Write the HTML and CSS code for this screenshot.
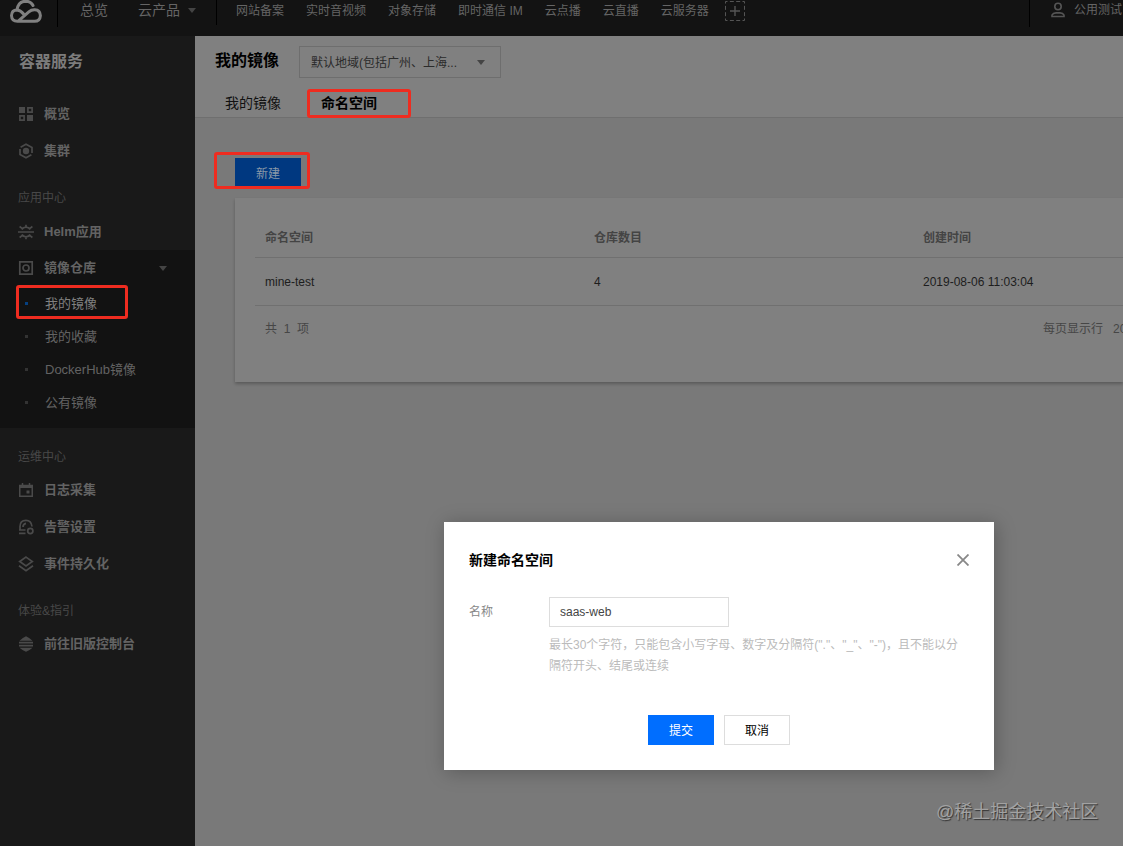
FILE: index.html
```html
<!DOCTYPE html>
<html lang="zh-CN">
<head>
<meta charset="utf-8">
<title>容器服务 - 命名空间</title>
<link rel="stylesheet" href="styles.css">
</head>
<body>
<div class="app">
  <header class="topbar">
    <div class="brand">
      <svg width="34" height="26" viewBox="0 0 34 26" fill="none" stroke="currentColor" stroke-width="3" stroke-linejoin="round" stroke-linecap="round"><path d="M14.800 14.200Q11.500 10 8 10Q2.700 10.200 2.500 15.500Q2.700 21.300 8.500 21.300H25.500Q31 21.300 31.400 15.600Q31.200 10.100 25.800 9.800Q22.500 9.600 19.800 11.900L9.800 20.600M8 9.600Q9.500 1.400 16.500 1.200Q21.800 1.200 24 5.500"/></svg>
    </div>
    <nav class="main-nav"><span>总览</span><span class="products">云产品<i class="caret"></i></span></nav>
    <nav class="shortcuts">
      <span>网站备案</span><span>实时音视频</span><span>对象存储</span><span>即时通信 IM</span><span>云点播</span><span>云直播</span><span>云服务器</span>
      <svg class="add" width="20" height="20" viewBox="0 0 20 20" fill="none" stroke="currentColor"><rect x=".5" y=".5" width="19" height="19" stroke-dasharray="4 2.330" stroke-dashoffset="2"/><path d="M10 5v10M5 10h10" stroke-width="1.400"/></svg>
    </nav>
    <div class="account">
      <svg width="14" height="16" viewBox="0 0 14 16" fill="none" stroke="currentColor" stroke-width="1.600"><circle cx="7" cy="4.500" r="3.200"/><path d="M1 14.500v-1.500Q2 10.900 5 10.900h4q3 0 4 2.100v1.500z"/></svg>
      <span>公用测试</span>
    </div>
  </header>

  <aside class="sidebar">
    <h1 class="side-title">容器服务</h1>
    <div class="item"><svg class="ico" viewBox="0 0 16 16"><path fill="currentColor" d="M1 1h6v6H1zM9 9h6v6H9z"/><path fill="none" stroke="currentColor" stroke-width="1.700" d="M9.900 1.900h4.200v4.200h-4.200zM1.900 9.900h4.200v4.200H1.900z"/></svg>概览</div>
    <div class="item"><svg class="ico" viewBox="0 0 16 16"><circle cx="8" cy="8" r="3.200" fill="currentColor"/><path fill="none" stroke="currentColor" stroke-width="1.700" d="M2.600 4.200 8 1.200l6 3.400v5.400M13.400 11.800 8 14.800l-6-3.400V6"/></svg>集群</div>
    <div class="label label-apps">应用中心</div>
    <div class="item"><svg class="ico" viewBox="0 0 16 16" fill="none" stroke="currentColor" stroke-width="1.700"><path d="M0 8h16M3.800 5.400Q5.300 3.200 8 3.200T12.200 5.400M3.800 10.600Q5.300 12.800 8 12.800T12.200 10.600M8 .8v2M8 13.200v2M1.600 2.500 4.400 4.600M14.400 2.500 11.600 4.600M1.600 13.500 4.400 11.400M14.400 13.500 11.600 11.400"/></svg>Helm应用</div>
    <section class="group">
      <div class="item"><svg class="ico" viewBox="0 0 16 16" fill="none" stroke="currentColor" stroke-width="1.700"><path d="M1.800 1.800h12.400v12.400H1.800z"/><circle cx="8" cy="8" r="3"/></svg>镜像仓库<i class="caret"></i></div>
      <div class="sub active">我的镜像<b class="mark mark-side"></b></div>
      <div class="sub">我的收藏</div>
      <div class="sub">DockerHub镜像</div>
      <div class="sub">公有镜像</div>
    </section>
    <div class="label">运维中心</div>
    <div class="item"><svg class="ico" viewBox="0 0 16 16"><path fill="none" stroke="currentColor" stroke-width="1.500" d="M1.750 3.500h12.500v10.750H1.750zM4.500 1v3M11.500 1v3"/><path fill="currentColor" d="M1 3h14v3H1zM8.500 8.500h3v3h-3z"/></svg>日志采集</div>
    <div class="item"><svg class="ico" viewBox="0 0 16 16" fill="none" stroke="currentColor" stroke-width="1.700"><path d="M2 11.200V7.500Q2 1.300 8 1.300Q13.300 1.300 14 7.500M1 11h6.500M1 14.300h6.500M5 8Q5 5 8 4.400"/><circle cx="12.300" cy="12" r="2.600"/></svg>告警设置</div>
    <div class="item"><svg class="ico" viewBox="0 0 16 16" fill="none" stroke="currentColor" stroke-width="1.700"><path d="M8 1.100 14.300 5.500 8 9.900 1.700 5.500zM1 9.800 8 14.800 15 9.800"/></svg>事件持久化</div>
    <div class="label">体验&amp;指引</div>
    <div class="item"><svg class="ico" viewBox="0 0 16 16" fill="none" stroke="currentColor" stroke-width="1.800"><path d="M1 6.700h14M1 9.700h14"/><path fill="currentColor" stroke="none" d="M1.500 4.700Q3.500 2.500 8 .3q4.500 2.200 6.500 4.400zM1.500 11.800Q3.500 13.800 8 15.800q4.500-2 6.500-4z"/></svg>前往旧版控制台</div>
  </aside>

  <main class="content">
    <div class="page-head">
      <div class="title-row">
        <h2>我的镜像</h2>
        <div class="region"><span>默认地域(包括广州、上海...</span><i class="caret"></i></div>
      </div>
      <div class="tabs"><span class="tab">我的镜像</span><span class="tab current">命名空间<b class="mark mark-tab"></b></span></div>
    </div>
    <div class="toolbar"><div class="create">新建<b class="mark mark-create"></b></div></div>
    <div class="card">
      <div class="row head"><span>命名空间</span><span>仓库数目</span><span>创建时间</span></div>
      <div class="row"><span>mine-test</span><span>4</span><span>2019-08-06 11:03:04</span></div>
      <div class="pager"><span class="total">共&nbsp; 1 &nbsp;项</span><span class="size">每页显示行</span><span>20</span></div>
    </div>
  </main>

  <div class="dialog">
    <div class="dialog-head"><h3>新建命名空间</h3>
      <svg width="12" height="12" viewBox="0 0 12 12" fill="none" stroke="currentColor" stroke-width="1.800"><path d="M.5.5l11 11M11.500.5l-11 11"/></svg>
    </div>
    <div class="field">
      <span class="field-name">名称</span>
      <div class="field-body">
        <div class="input">saas-web</div>
        <p class="help">最长30个字符，只能包含小写字母、数字及分隔符("."、"_"、"-")，且不能以分<br>隔符开头、结尾或连续</p>
      </div>
    </div>
    <div class="actions"><div class="btn primary">提交</div><div class="btn">取消</div></div>
  </div>
  <div class="watermark">@稀土掘金技术社区</div>
</div>
</body>
</html>
```

FILE: styles.css
```css
* { box-sizing: border-box; }
body { margin: 0; font: 12px/20px "Liberation Sans", "Noto Sans CJK SC", sans-serif; color: #1d1d1d; }
h1, h2, h3, p { margin: 0; }
svg { display: block; flex: none; }
.app { position: relative; width: 1123px; height: 846px; overflow: hidden; display: grid; grid-template-columns: 195px 928px; grid-template-rows: 36px 810px; background: #797979; white-space: nowrap; }
.caret { border: 4px solid transparent; border-top: 5px solid #444; border-bottom: 0; }

.topbar { grid-column: 1 / 3; display: flex; align-items: flex-start; background: #131313; color: #656565; }
.brand { width: 58px; height: 27px; padding-left: 9px; border-right: 1px solid #000; color: #808080; }
.main-nav { display: flex; gap: 30px; width: 159px; height: 25px; padding-left: 22px; border-right: 1px solid #000; font-size: 14px; }
.products { display: flex; align-items: center; gap: 8px; height: 20px; }
.shortcuts { display: flex; gap: 22px; padding-left: 19px; line-height: 22px; }
.add { margin: 1px 0 0 -6px; color: #555; }
.account { display: flex; gap: 9px; height: 27px; margin-left: auto; width: 94px; padding-left: 21px; border-left: 1px solid #000; line-height: 21px; overflow: hidden; }
.account svg { margin-top: 2px; color: #555; }

.sidebar { background: #191919; color: #636363; }
.side-title { height: 59px; padding-left: 19px; font-size: 16px; line-height: 52px; color: #7c7c7c; }
.item { display: flex; align-items: center; height: 37px; padding-left: 18px; font-size: 13px; font-weight: bold; }
.ico { width: 16px; height: 16px; margin-right: 10px; color: #4a4a4a; }
.label { height: 43px; padding: 14px 0 0 18px; line-height: 31px; color: #484848; }
.label-apps { height: 44px; }
.group { height: 178px; background: #121212; }
.group .item { padding-bottom: 1px; }
.group .caret { margin-left: 63px; }
.sub { position: relative; display: flex; align-items: center; height: 33px; padding-left: 25px; font-size: 13px; }
.sub::before { content: ""; width: 3px; height: 3px; margin-right: 17px; background: #333; }
.sub.active { color: #808080; }
.sub.active::before { background: #064080; }

.mark { position: absolute; border: 3px solid #ee2c20; border-radius: 3px; }
.mark-side { left: 16px; top: -2px; width: 112px; height: 34px; }
.mark-tab { left: -14px; top: -1px; width: 104px; height: 29px; }
.mark-create { left: -21px; top: -6px; width: 96px; height: 37px; }

.content { min-width: 0; }
.page-head { height: 82px; background: #808080; border-bottom: 1px solid #6f6f6f; }
.title-row { display: flex; height: 54px; padding: 10px 0 0 20px; }
h2 { width: 84px; font-size: 16px; line-height: 30px; color: #000; }
.region { display: flex; align-items: center; justify-content: space-between; width: 202px; height: 32px; padding: 1px 15px 0 11px; border: 1px solid #6e6e6e; color: #2b2b2b; }
.tabs { display: flex; gap: 40px; padding-left: 30px; font-size: 14px; line-height: 27px; color: #111; }
.tab { position: relative; }
.current { font-weight: bold; color: #000; }
.toolbar { height: 80px; padding: 40px 0 0 40px; }
.create { position: relative; width: 66px; height: 29px; background: #003880; color: #8b98a8; text-align: center; line-height: 32px; }
.card { height: 184px; margin-left: 40px; padding: 20px 0 0 20px; background: #808080; box-shadow: 0 2px 3px rgba(0,0,0,.25); }
.row { display: grid; grid-template-columns: 329px 329px 1fr; height: 48px; padding-left: 10px; border-bottom: 1px solid #707070; line-height: 48px; }
.row.head { height: 40px; line-height: 41px; font-weight: bold; color: #444; }
.pager { display: flex; height: 46px; padding-left: 10px; line-height: 47px; color: #464646; }
.total { width: 778px; }
.size { width: 70px; }
.pager span { flex: none; }

.dialog { position: absolute; left: 444px; top: 522px; width: 550px; height: 248px; padding: 25px; background: #fff; box-shadow: 2px 2px 18px rgba(0,0,0,.25); }
.dialog-head { display: flex; justify-content: space-between; height: 50px; padding-top: 3px; color: #888; }
.dialog-head svg { margin-top: 4px; }
h3 { font-size: 14px; line-height: 20px; color: #000; }
.field { display: flex; height: 118px; }
.field-name { width: 80px; line-height: 30px; color: #888; }
.input { width: 180px; height: 30px; padding-left: 10px; border: 1px solid #ddd; line-height: 28px; color: #444; }
.help { padding-top: 8px; line-height: 21px; color: #bbb; }
.actions { display: flex; justify-content: center; gap: 10px; }
.btn { width: 66px; height: 30px; border: 1px solid #ddd; text-align: center; line-height: 30px; color: #000; }
.primary { border-color: #006eff; background: #006eff; color: #fff; }
.watermark { position: absolute; left: 936px; top: 799px; font-size: 18px; line-height: 26px; color: #a2a2a2; text-shadow: 1px 1px 1px #333; }
```
